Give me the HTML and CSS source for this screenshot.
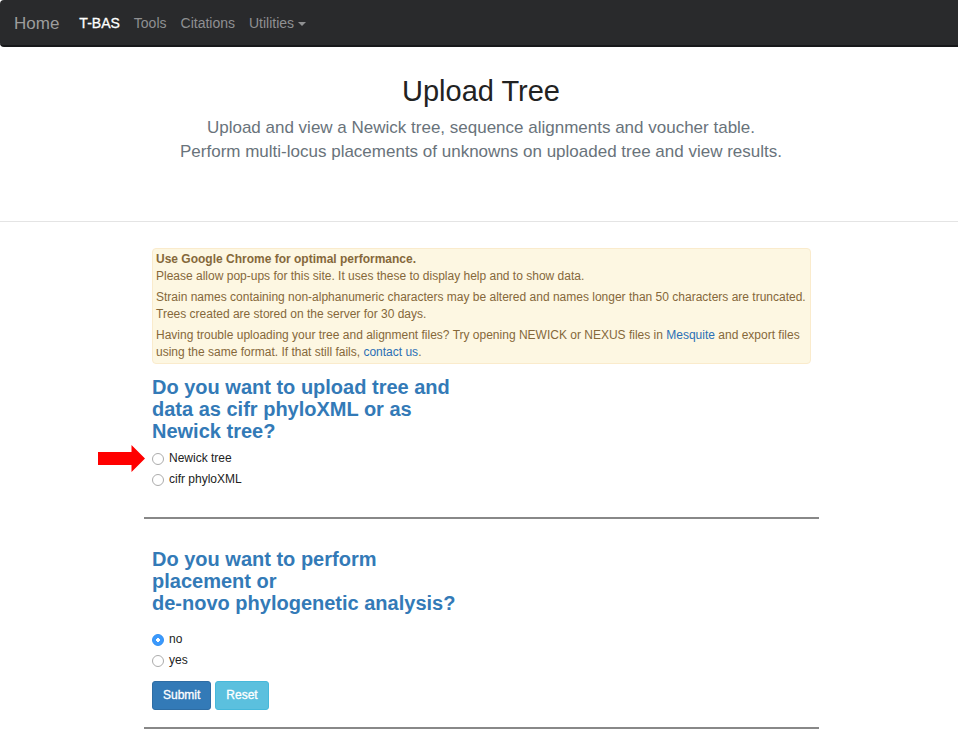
FILE: index.html
```html
<!DOCTYPE html>
<html lang="en">
<head>
<meta charset="utf-8">
<title>T-BAS - Upload Tree</title>
<link rel="stylesheet" href="styles.css">
</head>
<body>
<nav class="navbar">
  <a class="brand" href="#">Home</a>
  <a class="nav-link active" href="#">T-BAS</a>
  <a class="nav-link" href="#">Tools</a>
  <a class="nav-link" href="#">Citations</a>
  <a class="nav-link" href="#">Utilities <span class="caret"></span></a>
</nav>
<header class="masthead">
  <h1>Upload Tree</h1>
  <p>Upload and view a Newick tree, sequence alignments and voucher table.<br>Perform multi-locus placements of unknowns on uploaded tree and view results.</p>
</header>
<main>
  <form class="container">
    <div class="alert">
      <p><strong>Use Google Chrome for optimal performance.</strong><br>Please allow pop-ups for this site. It uses these to display help and to show data.</p>
      <p>Strain names containing non-alphanumeric characters may be altered and names longer than 50 characters are truncated.<br>Trees created are stored on the server for 30 days.</p>
      <p>Having trouble uploading your tree and alignment files? Try opening NEWICK or NEXUS files in <a href="#">Mesquite</a> and export files<br>using the same format. If that still fails, <a href="#">contact us</a>.</p>
    </div>
    <section class="question">
      <h2>Do you want to upload tree and<br>data as cifr phyloXML or as<br>Newick tree?</h2>
      <div class="choices">
        <label class="choice"><svg class="arrow" viewBox="0 0 47 27" aria-hidden="true"><path d="M0 7h33.500V0L47 13.500 33.500 27V20H0z"/></svg><input type="radio" name="format">Newick tree</label>
        <label class="choice"><input type="radio" name="format">cifr phyloXML</label>
      </div>
    </section>
    <hr>
    <section class="question">
      <h2>Do you want to perform<br>placement or<br>de-novo phylogenetic analysis?</h2>
      <div class="choices spaced">
        <label class="choice"><input type="radio" name="analysis" checked>no</label>
        <label class="choice"><input type="radio" name="analysis">yes</label>
      </div>
      <div class="actions">
        <button class="btn primary" type="submit">Submit</button>
        <button class="btn info" type="reset">Reset</button>
      </div>
    </section>
    <hr>
  </form>
</main>
</body>
</html>
```
FILE: styles.css
```css
* { box-sizing: border-box; }

body {
  margin: 0;
  background: #fff;
  color: #222;
  font: 12px/17px "Liberation Sans", Arial, sans-serif;
}

h1, h2, p { margin: 0; }
a { color: #2a6fb5; text-decoration: none; }

.navbar {
  display: flex;
  align-items: center;
  gap: 14px;
  height: 47px;
  padding: 1px 14px 0;
  background: #292a2c;
  border-bottom: 2px solid #17181a;
  border-radius: 4px 0 0 4px;
}
.brand { margin-right: 6px; color: #9d9d9d; font-size: 17px; }
.nav-link { color: #8f9092; font-size: 14px; }
.nav-link.active { color: #fff; -webkit-text-stroke: 0.3px #fff; }
.caret {
  display: inline-block;
  vertical-align: middle;
  border: 4px solid transparent;
  border-top-color: currentColor;
  border-bottom: 0;
}

.masthead {
  padding: 27px 0 57px 4px;
  border-bottom: 1px solid #e4e4e4;
  text-align: center;
}
.masthead h1 { font-size: 29px; font-weight: 400; line-height: 34px; color: #222; }
.masthead p { margin-top: 8px; font-size: 17px; line-height: 24px; color: #69737b; }

main { padding-left: 5px; }
.container { max-width: 675px; margin: 26px auto 0; }

.alert {
  display: grid;
  gap: 4px;
  margin: 0 8px;
  padding: 2px 3px;
  background: #fdf7e2;
  border: 1px solid #faebcc;
  border-radius: 4px;
  color: #85683a;
}

.question { padding: 0 8px; }
.alert + .question { padding-top: 12px; }
.question h2 { font-size: 20px; line-height: 22px; color: #337ab7; }
.choices { display: grid; gap: 4px; margin-top: 8px; }
.choices.spaced { margin-top: 17px; }
.choice { position: relative; display: flex; align-items: center; gap: 5px; width: max-content; }
.choice input {
  appearance: none;
  width: 12px;
  height: 12px;
  margin: 0;
  border: 1px solid #acacac;
  border-radius: 50%;
  background: #fff;
}
.choice input:checked {
  border-color: #2f8ff5;
  background: radial-gradient(circle, #fff 0 2px, #3b99fc 2px);
}
.arrow { position: absolute; right: 100%; width: 47px; height: 27px; margin-right: 7px; fill: #f00; }

hr { height: 2px; margin: 29px 0; border: 0; background: #888; }
.actions { display: flex; gap: 4px; margin-top: 12px; }
.question:last-of-type + hr { margin-top: 17px; }
.btn {
  padding: 5px 10px;
  border: 1px solid;
  border-radius: 3px;
  color: #fff;
  font: 12px/17px "Liberation Sans", Arial, sans-serif;
  -webkit-text-stroke: 0.3px #fff;
}
.primary { background: #337ab7; border-color: #2e6da4; }
.info { background: #5bc0de; border-color: #46b8da; }
```
